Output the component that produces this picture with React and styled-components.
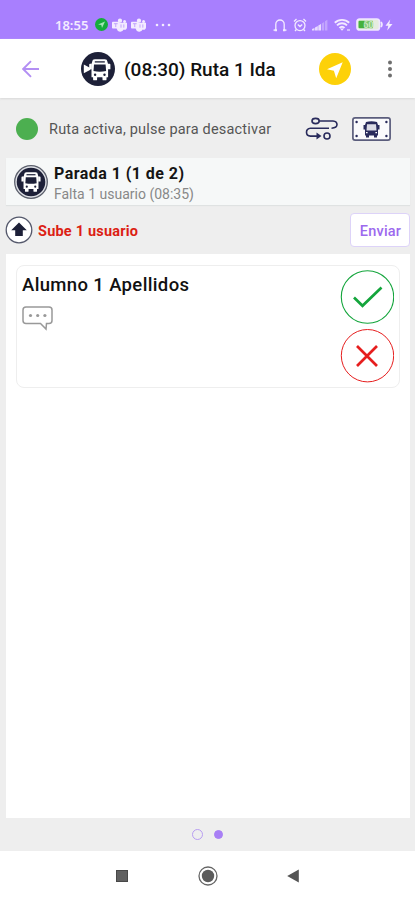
import React from 'react';
import styled, { createGlobalStyle } from 'styled-components';

const GlobalStyle = createGlobalStyle`
  body {
    margin: 0;
    background: #fff;
    font-family: Roboto, "Liberation Sans", sans-serif;
  }

  svg {
    display: block;
    flex: none;
  }
`;

const Screen = styled.div`
  display: flex;
  flex-direction: column;
  width: 415px;
  height: 900px;
  overflow: hidden;
  background: #eee;
`;

const StatusBar = styled.div`
  display: flex;
  align-items: center;
  box-sizing: border-box;
  height: 39px;
  padding: 10px 22px 0 55px;
  background: #a87ffe;
  color: #f3ebff;
`;

const Clock = styled.span`
  width: 40px;
  font: 600 13px/18px "Noto Sans", sans-serif;
  white-space: nowrap;
`;

const IconGroup = styled.div`
  display: flex;
  align-items: center;
  gap: ${({ $gap }) => $gap}px;
  margin-left: ${({ $push }) => ($push ? 'auto' : 0)};
`;

const MoreHolder = styled.div`
  margin-left: 5px;
`;

const AppBar = styled.header`
  display: flex;
  align-items: center;
  box-sizing: border-box;
  height: 59px;
  padding: 0 22px;
  background: #fff;
  box-shadow: 0 1px 2px #d8d8d8;
  z-index: 1;
`;

const Title = styled.h1`
  flex: 1;
  margin: 2px 0 0 9px;
  font-size: 19px;
  font-weight: 500;
  color: #111;
  white-space: nowrap;
`;

const BusHolder = styled.div`
  margin-left: 41px;
`;

const MenuHolder = styled.div`
  margin-left: 36px;
`;

const RouteStatus = styled.div`
  display: flex;
  align-items: center;
  box-sizing: border-box;
  height: 60px;
  padding: 1px 24px 0 16px;
`;

const ActiveDot = styled.span`
  width: 22px;
  height: 22px;
  border-radius: 50%;
  background: #4caf50;
`;

const StatusText = styled.span`
  flex: 1;
  margin: 2px 0 0 11px;
  font-size: 14.5px;
  letter-spacing: 0.2px;
  color: #555;
  white-space: nowrap;
`;

const Stop = styled.section`
  display: flex;
  align-items: center;
  box-sizing: border-box;
  height: 47px;
  margin: 0 5px 0 6px;
  padding-left: 8px;
  background: #f6f8f8;
  box-shadow: 0 1px 1px #dfe2e2;
`;

const StopText = styled.div`
  margin: 3px 0 0 6px;
`;

const StopName = styled.h2`
  margin: 0;
  font-size: 16px;
  font-weight: 700;
  line-height: 20px;
  letter-spacing: 0.45px;
  color: #151515;
`;

const StopNote = styled.p`
  margin: 1px 0 0;
  font-size: 14px;
  line-height: 18px;
  color: #888;
`;

const ActionRow = styled.div`
  display: flex;
  align-items: center;
  height: 49px;
  padding: 0 5px;
`;

const ActionText = styled.span`
  flex: 1;
  margin: 3px 0 0 5px;
  font-size: 14.5px;
  font-weight: 700;
  letter-spacing: 0.2px;
  color: #dc1e14;
`;

const SendButton = styled.button`
  box-sizing: border-box;
  width: 60px;
  height: 34px;
  padding: 3px 0 0 1px;
  border: 1px solid #ddd3f8;
  border-radius: 4px;
  background: #fff;
  font: 500 14.5px Roboto, sans-serif;
  letter-spacing: 0.2px;
  color: #9c69ee;
`;

const List = styled.main`
  flex: 1;
  margin: 0 5px 0 6px;
  padding: 11px 10px;
  background: #fff;
`;

const Card = styled.article`
  display: flex;
  justify-content: space-between;
  box-sizing: border-box;
  height: 123px;
  padding: 4px 5px;
  border: 1px solid #eee;
  border-radius: 8px;
`;

const StudentName = styled.h3`
  margin: 3px 0 9px;
  font-size: 18.5px;
  font-weight: 500;
  line-height: 24px;
  letter-spacing: 0.36px;
  color: #111;
  white-space: nowrap;
`;

const Choices = styled.div`
  display: flex;
  flex-direction: column;
  gap: 5px;
`;

const Pager = styled.div`
  display: flex;
  align-items: center;
  justify-content: center;
  gap: 11px;
  height: 33px;
`;

const Page = styled.span`
  box-sizing: border-box;
  width: ${({ $active }) => ($active ? 9 : 11)}px;
  height: ${({ $active }) => ($active ? 9 : 11)}px;
  border: 1.5px solid ${({ $active }) => ($active ? '#a87ff5' : '#b89df2')};
  border-radius: 50%;
  background: ${({ $active }) => ($active ? '#a87ff5' : 'transparent')};
`;

const NavBar = styled.nav`
  display: flex;
  align-items: center;
  justify-content: space-between;
  box-sizing: border-box;
  height: 49px;
  padding: 0 116px;
  background: #fff;
`;

const navy = '#1d2038';

const SentIcon = () => (
  <svg width="13" height="13" viewBox="0 0 13 13">
    <circle cx="6.5" cy="6.5" r="6.5" fill="#16ad3c" />
    <path d="M3 6.4 10 3.4 7 10 6.3 7Z" fill="#a4e5b4" />
  </svg>
);

const TeamsIcon = () => (
  <svg width="15" height="14" viewBox="0 0 16 14" fill="currentColor">
    <circle cx="8.5" cy="2.4" r="2.3" />
    <circle cx="13.4" cy="3.3" r="1.6" />
    <path d="M5 4.6h11v5a2.5 2.5 0 0 1-3.5 2.3A4 4 0 0 1 5 11Z" />
    <rect y="3.4" width="8" height="7.4" rx="0.8" />
    <path d="M2 5.6h4M4 5.6v3.6M9.6 6.4v3.4M12.6 6.4v3.4" stroke="#b995fe" strokeWidth="0.9" />
  </svg>
);

const MoreIcon = () => (
  <svg width="16" height="4" viewBox="0 0 16 4" fill="currentColor">
    <circle cx="2" cy="2" r="1.3" />
    <circle cx="8" cy="2" r="1.3" />
    <circle cx="14" cy="2" r="1.3" />
  </svg>
);

const HeadphonesIcon = () => (
  <svg width="14" height="14" viewBox="0 0 14 14" fill="none" stroke="currentColor" strokeWidth="1.3">
    <path d="M.5 12.2h2.3V6.2a4.2 4.2 0 0 1 8.4 0v6h2.3" />
    <path d="M1.6 12.2H4M10 12.2h2.4" strokeWidth="2" />
  </svg>
);

const AlarmIcon = () => (
  <svg width="14" height="14" viewBox="0 0 14 14" fill="none" stroke="currentColor" strokeWidth="1.3">
    <circle cx="7" cy="7.6" r="5" />
    <path d="m4.8 6.5 2.2 2 2.2-2M1 3.5 3.5 1M13 3.5 10.5 1M3.4 11.5 2 13M10.6 11.5 12 13" />
  </svg>
);

const SignalIcon = () => (
  <svg width="16" height="12" viewBox="0 0 16 12" fill="currentColor">
    <path d="M0 11.5V10l2.5-1v2.5ZM3 11.5V8.6L5.8 7v4.5ZM6.3 11.5V6.6L9 4.9v6.6Z" opacity="0.85" />
    <path d="M9.8 11.5V4.4l2.4-1.5v8.6ZM13 11.5V2.3L15.4.8v10.7Z" opacity="0.35" />
  </svg>
);

const WifiIcon = () => (
  <svg width="17" height="14" viewBox="0 0 17 14" fill="none" stroke="currentColor" strokeWidth="1.9">
    <path d="M.8 4.8a10.4 10.4 0 0 1 14.4 0M3 7.4a7 7 0 0 1 10 0M5.4 9.9a3.8 3.8 0 0 1 5.2 0" />
    <path d="m6 10.6 2 2.2 2-2.2Z" fill="currentColor" stroke="none" />
    <path d="M13 12h3" opacity="0.6" />
  </svg>
);

const BatteryIcon = () => (
  <svg width="27" height="13" viewBox="0 0 27 13">
    <rect x="1" y="1" width="22.5" height="11" rx="2.8" fill="#e6ecdf" stroke="#f0e8ff" strokeWidth="1.7" />
    <path d="M25 4q1.8 2.5 0 5" fill="none" stroke="#f0e8ff" strokeWidth="1.8" />
    <rect x="2.5" y="2.8" width="6.5" height="7.4" rx="1" fill="#45b13d" />
    <rect x="8" y="2.8" width="9" height="7.4" fill="#7cc86e" />
    <text x="12.5" y="9.5" fontSize="8.5" fontWeight="700" textAnchor="middle" fill="#f2fbef" stroke="#65bd58" strokeWidth="0.3">60</text>
  </svg>
);

const BoltIcon = () => (
  <svg width="8" height="12" viewBox="0 0 8 12" fill="currentColor">
    <path d="M5.2.5.5 6.7h2.8L2.2 11.5 7.5 5H4.3Z" />
  </svg>
);

const BackIcon = () => (
  <svg width="18" height="18" viewBox="0 0 18 18" fill="none" stroke="#b38ff3" strokeWidth="1.9">
    <path d="M17 9H1.5M9 1.2 1.2 9 9 16.8" />
  </svg>
);

// front view of the bus, shared by the route and stop badges
const BusFront = () => (
  <>
    <path d="M9.5 9q0-2 2.500-2h10q2.500 0 2.500 2l.8 3V25H8.700V12Z" fill="#fff" />
    <path d="M9 11.500H7.200q-.8 0-.8 1v4.500H9ZM25 11.500h1.800q.8 0 .8 1v4.500H25Z" fill="#fff" />
    <rect x="10.3" y="24" width="4" height="4" rx="0.9" fill="#fff" />
    <rect x="19.7" y="24" width="4" height="4" rx="0.9" fill="#fff" />
    <path d="M12 9.600h10" stroke={navy} strokeWidth="1.3" />
    <path d="M11.200 12.300h11.600l.5 6.400q-6.300 1.300-12.600 0Z" fill={navy} />
    <circle cx="12.3" cy="22.5" r="1.2" fill={navy} />
    <circle cx="21.7" cy="22.5" r="1.2" fill={navy} />
  </>
);

const RouteBadge = () => (
  <svg width="34" height="34" viewBox="0 0 34 34">
    <circle cx="17" cy="17" r="17" fill={navy} />
    <path d="m2.800 12.500 6.600 3.500v1.800l-6.600 3.500Z" fill="#fff" />
    <g transform="translate(1.8 .3)">
      <BusFront />
    </g>
  </svg>
);

const StopBadge = () => (
  <svg width="34" height="34" viewBox="0 0 34 34">
    <circle cx="17" cy="17" r="16.3" fill="#dfe1e6" stroke="#5b5f6c" strokeWidth="1.3" />
    <circle cx="17" cy="17" r="14.3" fill={navy} />
    <g transform="translate(1.7 .8) scale(.9 .93)">
      <BusFront />
    </g>
  </svg>
);

const NavigateIcon = () => (
  <svg width="32" height="32" viewBox="0 0 32 32">
    <circle cx="16" cy="16" r="16" fill="#fdd108" />
    <path d="M23.7 9.3 8 16.3l6.9 1.5 2.3 7.4Z" fill="#fff" />
  </svg>
);

const MenuIcon = () => (
  <svg width="6" height="20" viewBox="0 0 6 20" fill="#6e6e6e">
    <circle cx="3" cy="3.5" r="2" />
    <circle cx="3" cy="10" r="2" />
    <circle cx="3" cy="16.5" r="2" />
  </svg>
);

const RouteIcon = () => (
  <svg width="34" height="24" viewBox="0 0 34 24" fill="none" stroke="#292b5c" strokeWidth="1.6">
    <ellipse cx="10.6" cy="4" rx="3.6" ry="2.6" />
    <path d="M14.2 4H28q4 .4 4 3.6 0 3.3-5.5 3.6M24 11.2H5.5q-4 .3-4 4 0 3.7 4 3.9H14" />
    <path d="m11.500 15.600 5 3.500-5 3.500Z" fill="#292b5c" stroke="none" />
    <circle cx="22" cy="19" r="3" />
  </svg>
);

const BusSignIcon = () => (
  <svg width="39" height="24" viewBox="0 0 39 24">
    <rect x="0.9" y="0.9" width="37.2" height="22.2" rx="2.2" fill="#fafafc" stroke="#5b5d7c" strokeWidth="1.7" />
    <g fill="#292b5c">
      <circle cx="4.6" cy="5" r="1.2" />
      <circle cx="34.4" cy="5" r="1.2" />
      <circle cx="4.6" cy="19" r="1.2" />
      <circle cx="34.4" cy="19" r="1.2" />
      <path d="M14 5q5.500-1.500 11 0l1 3v10.500H13V8ZM11.500 8H13v4.500h-1.500ZM26 8h1.500v4.500H26ZM14 18h3v2.500h-3ZM22 18h3v2.500h-3Z" />
    </g>
    <path d="M15 7.200h9l.5 6.300h-10Z" fill="#dcdce6" />
    <path d="M14 15.600h1.600M23.400 15.600H25" stroke="#fff" strokeWidth="1.2" />
  </svg>
);

const BoardIcon = () => (
  <svg width="28" height="28" viewBox="0 0 28 28">
    <circle cx="14" cy="14" r="12.8" fill="#fff" stroke="#54586b" strokeWidth="1.3" />
    <path d="m14 6.500 7.800 7.700h-4V20h-7.600v-5.800h-4Z" fill={navy} />
  </svg>
);

const CommentIcon = () => (
  <svg width="31" height="25" viewBox="0 0 31 25" fill="none" stroke="#999" strokeWidth="1.5">
    <path d="M4 1h23q3 0 3 3v10.500q0 3-3 3h-2.500L24 23l-5.500-5.500H4q-3 0-3-3V4q0-3 3-3Z" />
    <g fill="#999" stroke="none">
      <circle cx="8.5" cy="9.5" r="1.6" />
      <circle cx="15.7" cy="9.5" r="1.6" />
      <circle cx="22.9" cy="9.5" r="1.6" />
    </g>
  </svg>
);

const AcceptIcon = () => (
  <svg width="54" height="54" viewBox="0 0 54 54" fill="none" stroke="#14a53c">
    <circle cx="27.5" cy="27" r="26.2" strokeWidth="1.1" />
    <path d="m14 27.500 8.500 8.300L41.500 17.500" strokeWidth="2.7" />
  </svg>
);

const RejectIcon = () => (
  <svg width="54" height="54" viewBox="0 0 54 54" fill="none" stroke="#e61e1e">
    <circle cx="27.5" cy="26.7" r="26.2" strokeWidth="1" />
    <path d="m17 17 20 20M37 17 17 37" strokeWidth="2.7" />
  </svg>
);

const RecentIcon = () => (
  <svg width="12" height="12" viewBox="0 0 12 12">
    <rect x="0.5" y="0.5" width="11" height="11" fill="#606060" stroke="#484848" />
  </svg>
);

const HomeIcon = () => (
  <svg width="20" height="20" viewBox="0 0 20 20">
    <circle cx="10" cy="10" r="9" fill="none" stroke="#666" strokeWidth="1.3" />
    <circle cx="10" cy="10" r="6.2" fill="#5c5c5c" />
  </svg>
);

const NavBackIcon = () => (
  <svg width="12" height="14" viewBox="0 0 12 14">
    <path d="M11.8.5v13L.2 7Z" fill="#555" />
  </svg>
);

const App = () => (
  <Screen>
    <GlobalStyle />
    <StatusBar>
      <Clock>18:55</Clock>
      <IconGroup $gap={4}>
        <SentIcon />
        <TeamsIcon />
        <TeamsIcon />
        <MoreHolder>
          <MoreIcon />
        </MoreHolder>
      </IconGroup>
      <IconGroup $gap={5.5} $push>
        <HeadphonesIcon />
        <AlarmIcon />
        <SignalIcon />
        <WifiIcon />
        <IconGroup $gap={2}>
          <BatteryIcon />
          <BoltIcon />
        </IconGroup>
      </IconGroup>
    </StatusBar>
    <AppBar>
      <BackIcon />
      <BusHolder>
        <RouteBadge />
      </BusHolder>
      <Title>(08:30) Ruta 1 Ida</Title>
      <NavigateIcon />
      <MenuHolder>
        <MenuIcon />
      </MenuHolder>
    </AppBar>
    <RouteStatus>
      <ActiveDot />
      <StatusText>Ruta activa, pulse para desactivar</StatusText>
      <IconGroup $gap={13}>
        <RouteIcon />
        <BusSignIcon />
      </IconGroup>
    </RouteStatus>
    <Stop>
      <StopBadge />
      <StopText>
        <StopName>Parada 1 (1 de 2)</StopName>
        <StopNote>Falta 1 usuario (08:35)</StopNote>
      </StopText>
    </Stop>
    <ActionRow>
      <BoardIcon />
      <ActionText>Sube 1 usuario</ActionText>
      <SendButton>Enviar</SendButton>
    </ActionRow>
    <List>
      <Card>
        <div>
          <StudentName>Alumno 1 Apellidos</StudentName>
          <CommentIcon />
        </div>
        <Choices>
          <AcceptIcon />
          <RejectIcon />
        </Choices>
      </Card>
    </List>
    <Pager>
      <Page />
      <Page $active />
    </Pager>
    <NavBar>
      <RecentIcon />
      <HomeIcon />
      <NavBackIcon />
    </NavBar>
  </Screen>
);

export default App;
